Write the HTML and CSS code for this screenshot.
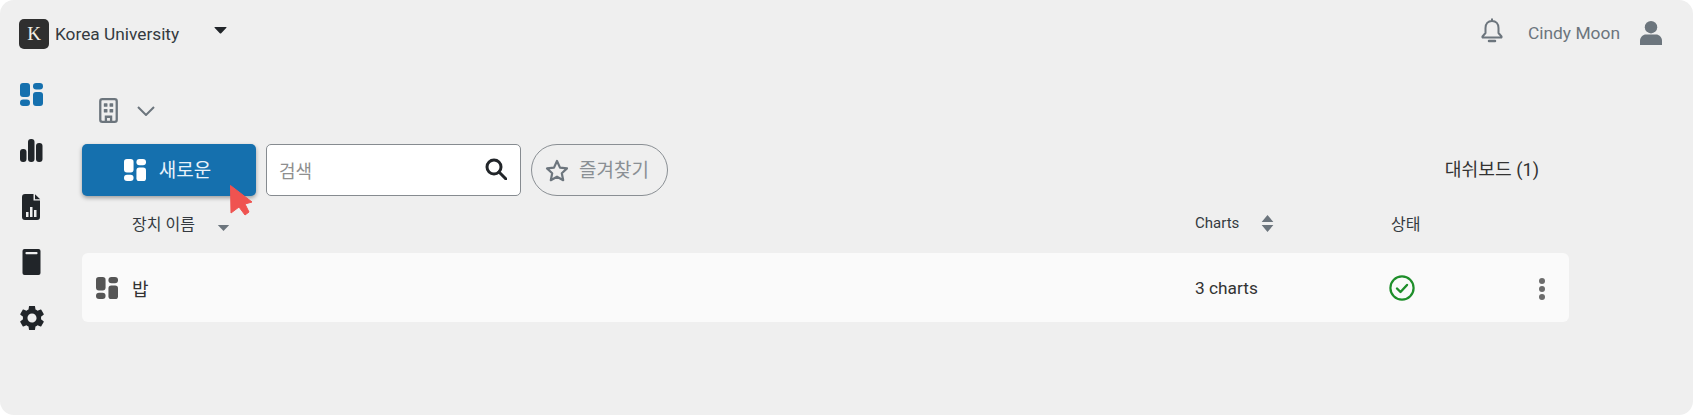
FILE: index.html
```html
<!DOCTYPE html>
<html lang="ko">
<head>
<meta charset="utf-8">
<title>대쉬보드</title>
<link rel="stylesheet" href="styles.css">
</head>
<body>
<svg class="defs" aria-hidden="true">
  <symbol id="dash" viewBox="0 0 23 23">
    <rect x="0" y="0" width="10" height="14" rx="3"/>
    <rect x="0" y="16.500" width="10" height="6.500" rx="3.200"/>
    <rect x="13" y="0" width="10" height="6.500" rx="3.200"/>
    <rect x="13" y="9" width="10" height="14" rx="3"/>
  </symbol>
</svg>
<div class="app">
  <header class="topbar">
    <div class="org">
      <span class="logo">K</span>
      <span class="org-name">Korea University</span>
      <svg class="org-caret" viewBox="0 0 13 7"><path d="M1 0h11q1 0 .4 .8L7.200 6.200q-.7 .8-1.400 0L.6 .8Q0 0 1 0z"/></svg>
    </div>
    <div class="user">
      <svg class="bell" viewBox="0 0 22 26" fill="none" stroke="#6c757d" stroke-width="2"><path d="M11 1.500v2.500M11 4c-4 0-6.500 3-6.500 7v5L1.500 19.500c-.3.5 0 1 .5 1h18c.5 0 .8-.5.500-1L17.500 16v-5c0-4-2.500-7-6.500-7z" stroke-linejoin="round"/><path d="M8 24h6" stroke-linecap="round" stroke-width="2.500"/></svg>
      <span class="user-name">Cindy Moon</span>
      <svg class="person" viewBox="0 0 22 24" fill="#6c757d"><circle cx="11" cy="6.200" r="6.200"/><path d="M0 24v-4c0-4 3-6.500 6-6.500h10c3 0 6 2.500 6 6.500v4z"/></svg>
    </div>
  </header>
  <div class="content">
    <nav class="sidebar">
      <a class="nav-item active"><svg class="nav-dash"><use href="#dash"/></svg></a>
      <a class="nav-item"><svg class="nav-svg" viewBox="0 0 23 23"><rect x="0" y="10" width="6.500" height="13" rx="3"/><rect x="8" y="0" width="6.500" height="23" rx="3"/><rect x="16" y="4" width="6.500" height="19" rx="3"/></svg></a>
      <a class="nav-item nav-low"><svg class="nav-svg" viewBox="0 0 23 26"><path d="M4 0h9.500v6.500h6.500V23a3 3 0 0 1-3 3H5a3 3 0 0 1-3-3V3a3 3 0 0 1 3-3z"/><path d="M15 .3l5.200 5H15z"/><g fill="#efefef"><rect x="6" y="18" width="2.500" height="5"/><rect x="10" y="13" width="2.500" height="10"/><rect x="14" y="16" width="2.500" height="7"/></g></svg></a>
      <a class="nav-item nav-low"><svg class="nav-svg" viewBox="0 0 23 26"><rect x="2.500" y="0" width="18" height="26" rx="2"/><rect x="5.500" y="3" width="12" height="2.200" rx=".8" fill="#efefef"/></svg></a>
      <a class="nav-item"><svg class="nav-gear" viewBox="2.500 2.500 19 19"><path d="M19.140 12.940c.04-.3.06-.61.06-.94 0-.32-.02-.64-.07-.94l2.030-1.580a.49.49 0 0 0 .12-.61l-1.920-3.320a.488.488 0 0 0-.59-.22l-2.390.96c-.5-.38-1.030-.7-1.620-.94l-.36-2.540a.484.484 0 0 0-.48-.41h-3.840c-.24 0-.43.17-.47.41l-.36 2.540c-.59.24-1.130.57-1.620.94l-2.390-.96c-.22-.08-.47 0-.59.22L2.740 8.870c-.12.21-.08.47.12.61l2.030 1.580c-.05.3-.09.63-.09.94s.02.64.07.94l-2.030 1.580a.49.49 0 0 0-.12.61l1.920 3.320c.12.22.37.29.59.22l2.390-.96c.5.38 1.030.7 1.620.94l.36 2.540c.05.24.24.41.48.41h3.840c.24 0 .44-.17.47-.41l.36-2.540c.59-.24 1.130-.56 1.620-.94l2.390.96c.22.08.47 0 .59-.22l1.920-3.320c.12-.22.07-.47-.12-.61l-2.010-1.580zM12 15.600c-1.980 0-3.600-1.620-3.600-3.600s1.620-3.600 3.600-3.600 3.600 1.620 3.600 3.600-1.620 3.600-3.600 3.600z"/></svg></a>
    </nav>
    <main class="main">
      <div class="scope">
        <svg class="building" viewBox="0 0 18 24" fill="none" stroke="#6c757d" stroke-width="2.200"><rect x="1.100" y="1.100" width="15.800" height="21.800" rx="2"/><path d="M6.500 23v-5h5v5"/><g fill="#6c757d" stroke="none"><rect x="4.500" y="5" width="3.500" height="3.500" rx=".6"/><rect x="10" y="5" width="3.500" height="3.500" rx=".6"/><rect x="4.500" y="10.500" width="3.500" height="3.500" rx=".6"/><rect x="10" y="10.500" width="3.500" height="3.500" rx=".6"/></g></svg>
        <svg class="chevron" viewBox="0 0 18 10" fill="none" stroke="#6c757d" stroke-width="2"><path d="M1 1l8 8 8-8"/></svg>
      </div>
      <div class="toolbar">
        <button class="new-btn"><svg class="new-icon"><use href="#dash"/></svg><span>새로운</span></button>
        <label class="search">
          <span class="search-text">검색</span>
          <svg class="search-icon" viewBox="0 0 22 22" fill="none" stroke="#212529" stroke-width="3"><circle cx="9" cy="9" r="7"/><path d="M14 14l7 7" stroke-linecap="round"/></svg>
        </label>
        <button class="fav"><svg class="star" viewBox="0 0 24 23" fill="none" stroke="#6c757d" stroke-width="2.200" stroke-linejoin="round"><path d="M12 2l3 6.600 7 .8-5.200 4.800 1.400 7L12 17.700 5.800 21.200l1.400-7L2 9.400l7-.8z"/></svg><span>즐겨찾기</span></button>
        <span class="count">대쉬보드 (1)</span>
      </div>
      <div class="cols">
        <div class="col-name"><span>장치 이름</span><svg class="sort-down" viewBox="0 0 13 6"><path d="M.8 0h11.400L6.500 6z"/></svg></div>
        <div class="col-charts"><span>Charts</span><svg class="sort-both" viewBox="0 0 12 16"><path d="M6 0l5.500 6.500H.5zM6 16L.5 9.500h11z"/></svg></div>
        <div class="col-status">상태</div>
      </div>
      <div class="row">
        <div class="col-name row-name"><svg class="row-icon"><use href="#dash"/></svg><span>밥</span></div>
        <div class="col-charts row-charts">3 charts</div>
        <div class="col-status row-status"><svg class="check" viewBox="0 0 26 26" fill="none" stroke="#1e8e2a"><circle cx="13" cy="13" r="11.600" stroke-width="2.200"/><path d="M8 13.500l3.500 3.500 6.500-7" stroke-width="2.400" stroke-linecap="round" stroke-linejoin="round"/></svg></div>
        <div class="row-more"><i></i><i></i><i></i></div>
      </div>
    </main>
  </div>
  <svg class="cursor" viewBox="0 0 23 31"><path d="M.5 .5L22 17l-7 2 4 8-4 3-6-8-8 6z" fill="#ef5350" stroke="#ef5350" stroke-linejoin="round"/></svg>
</div>
</body>
</html>
```
FILE: styles.css
```css
* { box-sizing: border-box; }
html, body { margin: 0; height: 100%; background: #fff; }
body { font-family: Roboto, "Noto Sans CJK KR", sans-serif; color: #333; overflow: hidden; }
.defs { display: none; }
.app { position: relative; width: 1693px; height: 415px; background: #efefef; border-radius: 14px; }

.topbar { height: 67px; display: flex; justify-content: space-between; align-items: flex-start; padding: 19px 30px 0 19px; }
.org, .user { display: flex; align-items: center; }
.logo { width: 30px; height: 30px; border-radius: 5px; background: #2f2f2f; color: #f3efe6; font: 400 19px/30px "Liberation Serif", serif; text-align: center; }
.org-name { margin-left: 6px; font-size: 17.300px; color: #343a40; width: 159px; }
.org-caret { width: 13px; height: 7px; fill: #212529; margin-top: -7px; }
.user { height: 28px; }
.bell { width: 22px; height: 26px; margin-top: -6px; }
.user-name { margin-left: 25px; margin-right: 20px; font-size: 17.400px; color: #6c757d; }
.person { width: 22px; height: 24px; margin-right: 1px; }

.content { display: flex; }
.sidebar { width: 82px; display: flex; flex-direction: column; padding-left: 20px; }
.nav-item { height: 55.500px; display: flex; align-items: center; width: 23px; fill: #212529; }
.nav-item.active { fill: #1570ae; }
.nav-dash, .nav-svg { width: 23px; height: 23px; display: block; }
.nav-low .nav-svg { height: 26px; margin-top: 2px; }
.nav-gear { width: 24px; height: 24px; flex: none; margin-top: 2px; }

.main { width: 1487px; display: flex; flex-direction: column; }
.scope { height: 77px; padding: 31px 0 0 17px; display: flex; align-items: flex-start; }
.building { width: 19px; height: 25px; }
.chevron { width: 18px; height: 10px; margin: 8px 0 0 19px; }

.toolbar { height: 52px; display: flex; align-items: stretch; font-size: 17px; }
.new-btn { width: 174px; border: 0; border-radius: 5px; background: #1570ae; color: #e8f2fa; font: inherit; font-size: 19px; display: flex; align-items: center; justify-content: center; gap: 13px; box-shadow: 0 2px 4px rgba(0,0,0,.35); padding: 0 3px 4px 0; }
.new-icon { width: 22px; height: 22px; fill: #fff; margin-top: 3px; }
.search { width: 255px; margin-left: 10px; border: 1.500px solid #868b90; border-radius: 5px; background: #fff; display: flex; align-items: center; justify-content: space-between; padding: 0 13px 0 12px; }
.search-text { color: #8f8f8f; font-size: 18px; }
.search-icon { width: 22px; height: 22px; margin-top: -3px; }
.fav { width: 137px; margin-left: 10px; border: 1.500px solid #8a8f94; border-radius: 26px; background: transparent; color: #8a8f94; font: inherit; font-size: 19px; display: flex; align-items: center; padding: 0 0 4px 13px; gap: 10px; }
.star { width: 24px; height: 23px; margin-top: 4px; flex: none; }
.count { margin-left: auto; margin-right: 30px; align-self: center; font-size: 18.200px; color: #333; margin-bottom: 4px; }

.cols, .row { display: flex; align-items: center; }
.cols { height: 57px; font-size: 15px; color: #343a40; padding-bottom: 3px; }
.col-name { width: 1113px; display: flex; align-items: center; padding-left: 50px; }
.col-name span { font-size: 16px; }
.col-charts { width: 196px; display: flex; align-items: center; }
.col-status { width: 178px; font-size: 16px; }
.sort-down { width: 13px; height: 6px; fill: #6c757d; margin: 10px 0 0 22px; }
.sort-both { width: 13px; height: 17px; fill: #6c757d; margin-left: 22px; }
.row { height: 69px; border-radius: 6px; background: #fafafa; font-size: 17.300px; color: #333; position: relative; }
.row-name { padding-left: 14px; }
.row-name span { font-size: 18px; }
.row-icon { width: 22px; height: 22px; fill: #555; margin-right: 14px; }
.row-status { display: flex; align-items: center; }
.check { width: 26px; height: 26px; margin-left: -2px; }
.row-more { position: absolute; left: 1457px; top: 25px; display: flex; flex-direction: column; gap: 2px; }
.row-more i { display: block; width: 6px; height: 6px; border-radius: 50%; background: #6c6c6c; }

.cursor { position: absolute; left: 230px; top: 185px; width: 23px; height: 31px; }
```
